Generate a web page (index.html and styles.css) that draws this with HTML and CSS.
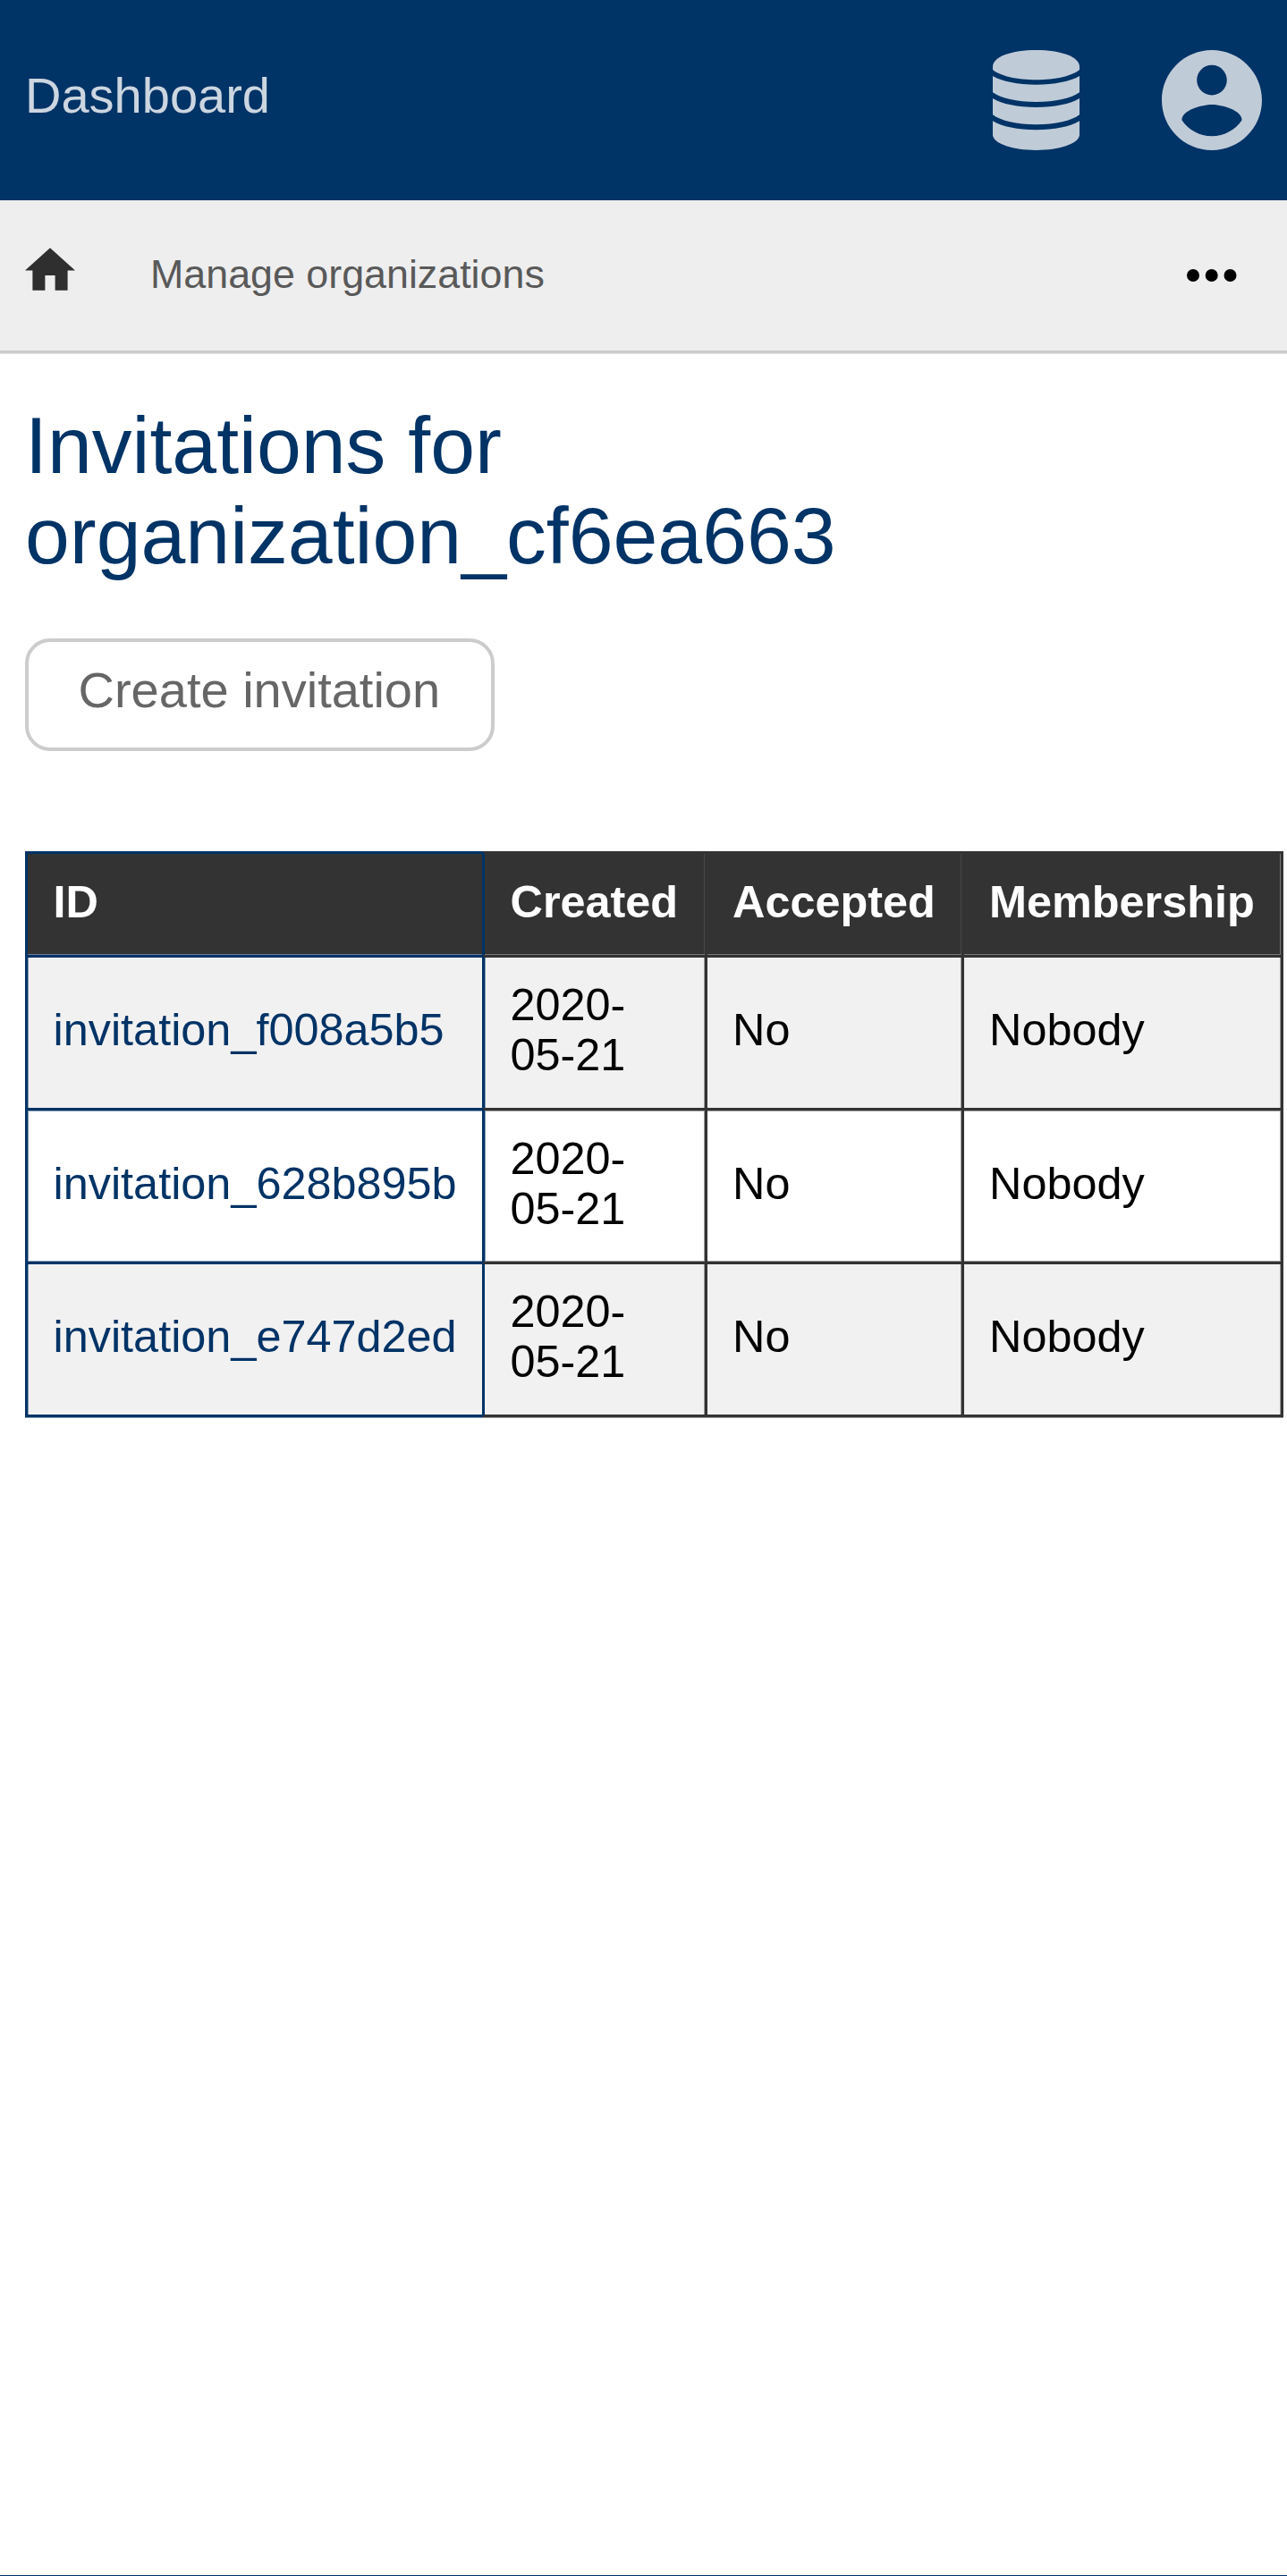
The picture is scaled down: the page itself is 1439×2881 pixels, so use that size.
FILE: index.html
```html
<!DOCTYPE html>
<html lang="en">
<head>
<meta charset="utf-8">
<title>Invitations</title>
<link rel="stylesheet" href="styles.css">
</head>
<body>
<header class="topbar">
  <a class="topbar-title">Dashboard</a>
  <nav class="topbar-icons">
    <svg class="icon-database" viewBox="0 0 291 336">
      <path d="M0 56C0 22 64 0 145.500 0S291 22 291 56V66C268 86 210 100 145.500 100S23 86 0 66Z"/>
      <path d="M0 87C30 105 85 116 145.500 116S261 105 291 87V142C265 162 210 174 145.500 174S26 162 0 142Z"/>
      <path d="M0 162C30 181 85 192 145.500 192S261 181 291 162V217C265 237 210 250 145.500 250S26 237 0 217Z"/>
      <path d="M0 238C30 257 85 268 145.500 268S261 257 291 238V286C287 315 222 336 145.500 336S4 315 0 286Z"/>
    </svg>
    <svg class="icon-account" viewBox="2 2 20 20">
      <path d="M12 2C6.480 2 2 6.480 2 12s4.480 10 10 10 10-4.480 10-10S17.520 2 12 2zm0 3c1.660 0 3 1.340 3 3s-1.340 3-3 3-3-1.340-3-3 1.340-3 3-3zm0 14.200c-2.500 0-4.710-1.280-6-3.220.03-1.990 4-3.080 6-3.080 1.990 0 5.970 1.090 6 3.080-1.290 1.940-3.500 3.220-6 3.220z"/>
    </svg>
  </nav>
</header>
<nav class="breadcrumbs">
  <svg class="icon-home" viewBox="2 3 20 17"><path d="M10 20v-6h4v6h5v-8h3L12 3 2 12h3v8z"/></svg>
  <a class="crumb">Manage organizations</a>
  <svg class="icon-more" viewBox="0 0 56 14"><circle cx="7" cy="7" r="7"/><circle cx="27.700" cy="7" r="7"/><circle cx="48.500" cy="7" r="7"/></svg>
</nav>
<main class="content">
  <h1 class="title">Invitations for<br>organization_cf6ea663</h1>
  <a class="button">Create invitation</a>
  <table class="invitations">
    <colgroup><col class="col-id"><col class="col-created"><col class="col-accepted"><col class="col-membership"></colgroup>
    <thead>
      <tr><th>ID</th><th>Created</th><th>Accepted</th><th>Membership</th></tr>
    </thead>
    <tbody>
      <tr><td><a>invitation_f008a5b5</a></td><td>2020-<br>05-21</td><td>No</td><td>Nobody</td></tr>
      <tr><td><a>invitation_628b895b</a></td><td>2020-<br>05-21</td><td>No</td><td>Nobody</td></tr>
      <tr><td><a>invitation_e747d2ed</a></td><td>2020-<br>05-21</td><td>No</td><td>Nobody</td></tr>
    </tbody>
  </table>
</main>
<footer class="footer"></footer>
</body>
</html>
```
FILE: styles.css
```css
* { box-sizing: border-box; }
body {
  margin: 0;
  height: 2881px;
  display: flex;
  flex-direction: column;
  overflow: hidden;
  background: #fff;
  color: #000;
  font-family: "Liberation Sans", Arial, sans-serif;
}
.topbar {
  height: 224px;
  flex: none;
  display: flex;
  align-items: center;
  justify-content: space-between;
  padding: 0 28px;
  background: #036;
}
.topbar-title {
  font-size: 56px;
  line-height: 64px;
  padding-bottom: 10px;
  color: #ccd6e0;
}
.topbar-icons { display: flex; gap: 92px; fill: #bfccd8; }
.icon-database { width: 97px; height: 112px; }
.icon-account { width: 112px; height: 112px; }
.breadcrumbs {
  height: 171px;
  flex: none;
  display: flex;
  align-items: center;
  padding: 0 56px 4px 28px;
  background: #eee;
  border-bottom: 3px solid #ccc;
  box-shadow: 0 1px #e2e2e2;
}
.icon-home { width: 56px; height: 48px; margin-bottom: 10px; fill: #2f2f2f; }
.crumb {
  margin-left: 84px;
  font-size: 44.8px;
  line-height: 52px;
  color: #595959;
}
.icon-more { width: 56px; height: 14px; margin: 4px 0 0 auto; }
.content { flex: 1; padding: 53px 0 0 28px; }
.title {
  margin: 0 0 64px;
  font-size: 89.6px;
  line-height: 101px;
  font-weight: 400;
  color: #036;
}
.button {
  display: block;
  width: 525px;
  height: 126px;
  padding: 22px 0 0 55.5px;
  border: 4px solid #ccc;
  border-radius: 28px;
  font-size: 56px;
  line-height: 64px;
  color: #666;
}
.invitations {
  width: 1407px;
  margin-top: 112px;
  table-layout: fixed;
  border-collapse: separate;
  border-spacing: 0;
  font-size: 50.4px;
  line-height: 56px;
  text-align: left;
}
.col-id { width: 511px; }
.col-created { width: 249px; }
.col-accepted { width: 287px; }
.col-membership { width: 360px; }
th, td {
  padding: 0 0 7px 28px;
  border: 0 solid #333;
  border-width: 3px 0 0 3px;
  vertical-align: middle;
}
th {
  height: 116px;
  padding-bottom: 6px;
  background: #333;
  color: #fff;
  box-shadow: inset -1px -1px #777;
}
th:nth-child(2), th:nth-child(3) { box-shadow: inset 0 -1px #777, inset -1px 0 #484848; }
th:first-child { box-shadow: inset 0 -1px #6a7f95; }

/* Cell edges carry a soft 1px line beside each solid border. */
td { --edge: #999; height: 171px; box-shadow: inset -1px 0 var(--edge); }
td:first-child { --edge: #7f99b2; box-shadow: inset 1px 0 var(--edge); }
td:nth-child(2) { box-shadow: inset -1px 0 var(--edge), inset 1px 0 #7f99b2; }
tbody tr:nth-child(2) td {
  height: 172px;
  padding-bottom: 5px;
  box-shadow: inset -1px 0 var(--edge), inset 0 1px var(--edge), inset 0 -1px var(--edge);
}
tbody tr:nth-child(2) td:first-child {
  box-shadow: inset 1px 0 var(--edge), inset 0 1px var(--edge), inset 0 -1px var(--edge);
}
tbody tr:nth-child(2) td:nth-child(2) {
  box-shadow: inset -1px 0 var(--edge), inset 1px 0 #7f99b2, inset 0 1px var(--edge), inset 0 -1px var(--edge);
}
tbody tr:last-child td { height: 174px; border-bottom-width: 3px; }
tbody tr:last-child td:nth-child(n+2) { box-shadow: inset -1px 0 var(--edge), 0 1px var(--edge); }
tbody tr:last-child td:first-child { box-shadow: inset 1px 0 var(--edge), 0 1px var(--edge); }
tbody tr:nth-child(odd) td { background: #f1f1f1; }
th:last-child, td:last-child { border-right-width: 3px; }
th:first-child, td:first-child { border-color: #036; color: #036; padding-left: 28.5px; }
th:first-child { color: #fff; }
th:nth-child(2), td:nth-child(2) { border-left-color: #036; padding-left: 28.5px; }
.footer { flex: none; height: 1px; background: #036; }
```
